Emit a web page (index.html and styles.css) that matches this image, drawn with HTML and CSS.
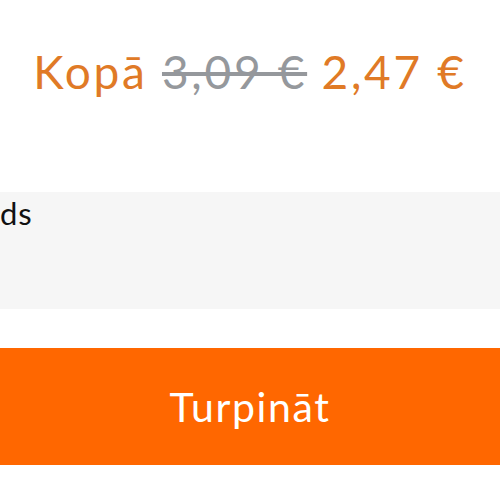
FILE: index.html
```html
<!DOCTYPE html>
<html lang="lv">
  <head>
    <meta charset="UTF-8">
    <title>Kopā</title>
    <link rel="stylesheet" href="styles.css">
  </head>
  <body>
    <h1 class="total">Kopā <span class="old-price">3,09 €</span> 2,47 €</h1>

    <div class="note-box">
      <div class="note-text">ds</div>
    </div>

    <button class="continue-btn">Turpināt</button>
  </body>
</html>
```

FILE: styles.css
```css
body {
  margin: 0;
  font-family: Lato, "Open Sans", sans-serif;
  background-color: #fff;
  color: #000;
}
.total {
  margin: 0;
  padding-top: 42px;
  height: 150px;
  box-sizing: border-box;
  text-align: center;
  font-size: 46px;
  font-weight: 400;
  line-height: 60px;
  letter-spacing: 2.7px;
  color: #e07a26;
}
.old-price {
  color: #95989c;
  text-decoration: line-through;
  text-decoration-thickness: 4px;
}
.note-box {
  margin-top: 42px;
  height: 117px;
  background-color: #f6f6f6;
}
.note-text {
  font-size: 31px;
  line-height: 40px;
  letter-spacing: 1px;
  color: #111;
  padding-top: 1px;
}
.continue-btn {
  display: block;
  width: 100%;
  height: 117px;
  margin-top: 39px;
  border: none;
  background-color: #ff6700;
  color: #fff;
  font-family: Lato, "Open Sans", sans-serif;
  font-size: 41px;
  letter-spacing: 1.6px;
  cursor: pointer;
}
```
